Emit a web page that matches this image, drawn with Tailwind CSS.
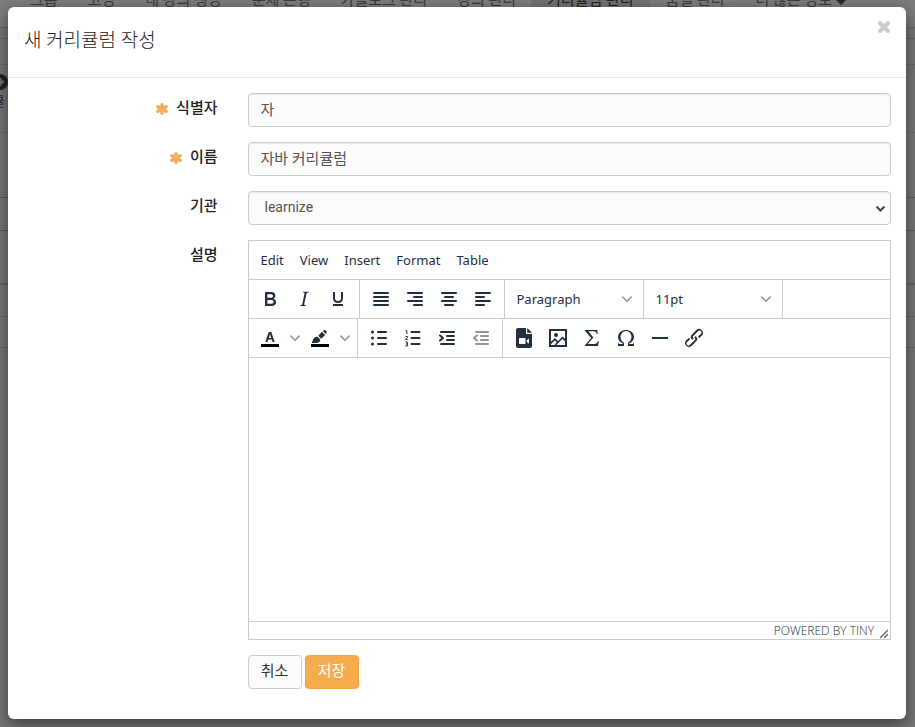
<!DOCTYPE html>
<html lang="ko">
<head>
<meta charset="utf-8">
<meta name="viewport" content="width=device-width, initial-scale=1">
<title>새 커리큘럼 작성</title>
<script src="https://cdn.jsdelivr.net/npm/@tailwindcss/browser@4"></script>
</head>
<body class="min-h-screen overflow-hidden bg-[#ececec] font-['Roboto','Noto_Sans_CJK_KR',sans-serif] text-[15px] text-[#333]">

<!-- Page behind the dialog -->
<div aria-hidden="true" class="absolute inset-0 overflow-hidden">
  <nav class="-mt-4 flex h-11 border-b border-[#d0d0d0] bg-[#f8f8f8] pl-[15px] leading-8 whitespace-nowrap text-[#777]">
    <span class="px-[15px]">그룹</span>
    <span class="px-[15px]">고정</span>
    <span class="px-[15px]">내 강의 생성</span>
    <span class="px-[15px]">문제 은행</span>
    <span class="px-[15px]">카탈로그 관리</span>
    <span class="px-[15px]">강의 관리</span>
    <span class="bg-[#e4e4e4] px-4 text-[#444]">커리큘럼 관리</span>
    <span class="px-4">품질 관리</span>
    <span class="flex gap-1 px-[15px]">더 많은 정보 <span class="mt-4 h-0 border-x-[5px] border-t-[5px] border-x-transparent border-t-[#555]"></span></span>
  </nav>
  <div class="h-[11px] border-b border-[#c8c8c8]"></div>
  <div class="h-[26px] border-b border-[#d0d0d0]"></div>
  <div class="relative h-[68px] border-b border-[#d4d4d4]">
    <svg class="absolute top-[9px] -left-2 size-4" viewBox="0 0 16 16"><circle cx="8" cy="8" r="8" fill="#444"/><path d="M8 4v8M4 8h8" stroke="#ddd" stroke-width="3"/></svg>
    <span class="absolute top-[26px] -left-2 text-[14px] leading-5 text-[#666]">큘</span>
  </div>
  <div class="h-[65px] border-b border-[#b8b8b8]"></div>
  <div class="h-[33px] border-b border-[#b8b8b8]"></div>
  <div class="h-[54px] border-b-2 border-[#c8c8c8]"></div>
  <div class="h-8 border-b border-[#c8c8c8]"></div>
  <div class="h-[31px] border-b border-[#c8c8c8]"></div>
</div>
<div class="absolute inset-0 bg-black/50"></div>

<!-- Dialog -->
<main role="dialog" aria-labelledby="dlg-title" class="relative mt-[7px] mr-[9px] ml-2 rounded-md bg-white shadow-[0_5px_15px_rgba(0,0,0,0.5)]">
  <header class="flex items-start justify-between border-b border-[#e5e5e5] pt-3 pr-[14px] pb-[22px] pl-4">
    <h1 id="dlg-title" class="pt-2 text-[19px] leading-7 font-light text-[#222]">새 커리큘럼 작성</h1>
    <button type="button" aria-label="닫기" class="flex size-4 items-center justify-center text-[#ccc]">
      <svg class="size-4" viewBox="0 0 16 16" fill="none" stroke="currentColor" stroke-width="4" stroke-linecap="round"><path d="M4 4l8 8M12 4l-8 8"/></svg>
    </button>
  </header>

  <form class="grid grid-cols-[25%_75%] gap-y-[15px] pt-[15px] pb-[30px]" onsubmit="return false">
    <label for="f-id" class="flex h-[30px] items-center justify-end gap-2 px-[15px] font-medium text-[#222]">
      <svg class="mt-[2px] size-3 text-[#f0ad5a]" viewBox="0 0 12 12" stroke="currentColor" stroke-width="3.400" stroke-linecap="round"><path d="M6 1.700v8.600M1.900 3.700l8.200 4.600M10.100 3.700l-8.200 4.600"/></svg>식별자</label>
    <div class="px-[15px]"><input id="f-id" type="text" value="자" class="block h-[34px] w-full rounded border border-[#ccc] bg-[#fcfcfc] px-3 pb-1 text-[#555] shadow-[inset_0_1px_1px_rgba(0,0,0,0.075)]"></div>

    <label for="f-name" class="flex h-[30px] items-center justify-end gap-2 px-[15px] font-medium text-[#222]">
      <svg class="mt-[2px] size-3 text-[#f0ad5a]" viewBox="0 0 12 12" stroke="currentColor" stroke-width="3.400" stroke-linecap="round"><path d="M6 1.700v8.600M1.900 3.700l8.200 4.600M10.100 3.700l-8.200 4.600"/></svg>이름</label>
    <div class="px-[15px]"><input id="f-name" type="text" value="자바 커리큘럼" class="block h-[34px] w-full rounded border border-[#ccc] bg-[#fcfcfc] px-3 pb-1 text-[#555] shadow-[inset_0_1px_1px_rgba(0,0,0,0.075)]"></div>

    <label for="f-org" class="flex h-[30px] items-center justify-end px-[15px] font-medium text-[#222]">기관</label>
    <div class="relative px-[15px]">
      <select id="f-org" class="block h-[34px] w-full appearance-none rounded border border-[#ccc] bg-[#fcfcfc] px-4 pb-[2px] text-[14px] text-[#555] shadow-[inset_0_1px_1px_rgba(0,0,0,0.075)]"><option>learnize</option></select>
      <svg class="pointer-events-none absolute top-3 right-5 size-[11px]" viewBox="0 0 11 11" fill="none" stroke="#444" stroke-width="2"><path d="M1.500 3.500l4 4 4-4"/></svg>
    </div>

    <label for="f-desc" class="flex h-[30px] items-center justify-end px-[15px] font-medium text-[#222]">설명</label>
    <div class="px-[15px]">
      <div class="border border-[#ccc] font-['Noto_Sans',sans-serif] text-[13px] text-[#222f3e]">
        <div role="menubar" class="flex h-[39px] items-center border-b border-[#ccc] px-1 pt-[2px]">
          <button type="button" class="px-2">Edit</button>
          <button type="button" class="px-2">View</button>
          <button type="button" class="px-2">Insert</button>
          <button type="button" class="px-2">Format</button>
          <button type="button" class="px-2">Table</button>
        </div>
        <div class="flex h-[39px] border-b border-[#ccc]">
          <div class="flex items-center border-r border-[#ccc] px-1">
            <button type="button" aria-label="Bold" class="flex h-7 w-[34px] items-center justify-center"><svg class="size-6" viewBox="0 0 24 24" fill="currentColor"><path fill-rule="evenodd" d="M7.800 19c-.3 0-.5 0-.6-.2l-.2-.5V5.700c0-.2 0-.4.2-.5l.6-.2h5c1.500 0 2.700.3 3.500 1 .7.6 1.100 1.400 1.100 2.500a3 3 0 0 1-.6 1.900c-.4.6-1 1-1.600 1.200.4.1.9.3 1.300.6s.8.7 1 1.200c.4.4.5 1 .5 1.600 0 1.300-.4 2.300-1.300 3-.8.7-2.100 1-3.800 1H7.800zm5-8.300c.6 0 1.200-.1 1.600-.5.4-.3.6-.7.6-1.300 0-1.100-.8-1.700-2.300-1.700H9.300v3.500h3.400zm.5 6c.7 0 1.300-.1 1.700-.4.4-.4.6-.9.6-1.500s-.2-1-.7-1.400c-.4-.3-1-.4-2-.4H9.400v3.800h4z"/></svg></button>
            <button type="button" aria-label="Italic" class="flex h-7 w-[34px] items-center justify-center"><svg class="size-6" viewBox="0 0 24 24" fill="currentColor"><path d="M16.700 4.700l-.1.9h-.3c-.6 0-1 0-1.400.3-.3.3-.4.6-.5 1.100l-2.100 9.800v.6c0 .5.4.8 1.400.8h.2l-.2.8H8l.2-.8h.2c1.100 0 1.800-.5 2-1.500l2-9.800.1-.5c0-.6-.4-.8-1.400-.8h-.3l.2-.9h5.800z"/></svg></button>
            <button type="button" aria-label="Underline" class="flex h-7 w-[34px] items-center justify-center"><svg class="size-6" viewBox="0 0 24 24" fill="none" stroke="currentColor" stroke-width="2"><path d="M8 5v6c0 2.500 1.500 4 4 4s4-1.500 4-4V5M7 18h10"/></svg></button>
          </div>
          <div class="flex items-center border-r border-[#ccc] px-1">
            <button type="button" aria-label="Justify" class="flex h-7 w-[34px] items-center justify-center"><svg class="size-6" viewBox="0 0 24 24" stroke="currentColor" stroke-width="2" stroke-linecap="round"><path d="M5 6h14M5 10h14M5 14h14M5 18h14"/></svg></button>
            <button type="button" aria-label="Align right" class="flex h-7 w-[34px] items-center justify-center"><svg class="size-6" viewBox="0 0 24 24" stroke="currentColor" stroke-width="2" stroke-linecap="round"><path d="M5 6h14M11 10h8M5 14h14M11 18h8"/></svg></button>
            <button type="button" aria-label="Align center" class="flex h-7 w-[34px] items-center justify-center"><svg class="size-6" viewBox="0 0 24 24" stroke="currentColor" stroke-width="2" stroke-linecap="round"><path d="M5 6h14M8 10h8M5 14h14M8 18h8"/></svg></button>
            <button type="button" aria-label="Align left" class="flex h-7 w-[34px] items-center justify-center"><svg class="size-6" viewBox="0 0 24 24" stroke="currentColor" stroke-width="2" stroke-linecap="round"><path d="M5 6h14M5 10h8M5 14h14M5 18h8"/></svg></button>
          </div>
          <div class="flex items-center border-r border-[#ccc] px-1">
            <button type="button" class="flex h-7 w-[130px] items-center justify-between pr-[7px] pl-2"><span class="pt-[2px]">Paragraph</span> <svg class="size-[10px]" viewBox="0 0 10 10" fill="none" stroke="#8b9299" stroke-width="1.500" stroke-linecap="round"><path d="M.8 3L5 7.200 9.200 3"/></svg></button>
          </div>
          <div class="flex items-center border-r border-[#ccc] px-1">
            <button type="button" class="flex h-7 w-[130px] items-center justify-between pr-[7px] pl-2"><span class="pt-[2px]">11pt</span> <svg class="size-[10px]" viewBox="0 0 10 10" fill="none" stroke="#8b9299" stroke-width="1.500" stroke-linecap="round"><path d="M.8 3L5 7.200 9.200 3"/></svg></button>
          </div>
        </div>
        <div class="flex h-[39px] border-b border-[#ccc]">
          <div class="flex items-center border-r border-[#ccc] px-1">
            <button type="button" aria-label="Text color" class="flex h-7 w-[34px] items-center justify-center"><svg class="size-6" viewBox="0 0 24 24" fill="currentColor"><path d="M3 18h18v3H3z" fill="#000"/><path fill-rule="evenodd" d="M7.300 16L10.700 6h2.600l3.400 10h-2.100l-.8-2.400h-3.600L9.400 16zM12 8.300L10.800 12h2.400z"/></svg></button>
            <button type="button" aria-label="Text color menu" class="flex h-7 w-4 items-center justify-center"><svg class="size-[10px]" viewBox="0 0 10 10" fill="none" stroke="#8b9299" stroke-width="1.500" stroke-linecap="round"><path d="M.8 3L5 7.200 9.200 3"/></svg></button>
            <button type="button" aria-label="Background color" class="flex h-7 w-[34px] items-center justify-center"><svg class="size-6" viewBox="0 0 24 24" fill="currentColor"><path d="M3 18h18v3H3z" fill="#000"/><path d="M3.500 17c.9-.9 1-2.200 1.700-3.700.8-1.800 2.300-2.800 4.300-2.600l2.800 2.900c.2 2-1.600 3.400-3.800 3.400zM10.300 9.700l3.600-3.900 3.200 3.200-3.900 3.700zM14.800 4.900c1-1 2.300-1.100 3.200-.2s.7 2.200-.1 3.300z"/></svg></button>
            <button type="button" aria-label="Background color menu" class="flex h-7 w-4 items-center justify-center"><svg class="size-[10px]" viewBox="0 0 10 10" fill="none" stroke="#8b9299" stroke-width="1.500" stroke-linecap="round"><path d="M.8 3L5 7.200 9.200 3"/></svg></button>
          </div>
          <div class="flex items-center border-r border-[#ccc] px-1">
            <button type="button" aria-label="Bullet list" class="flex h-7 w-[34px] items-center justify-center"><svg class="size-6" viewBox="0 0 24 24" fill="currentColor"><g stroke="currentColor" stroke-width="2" stroke-linecap="round"><path d="M11 6h8M11 12h8M11 18h8"/></g><circle cx="5.500" cy="6" r="1.500"/><circle cx="5.500" cy="12" r="1.500"/><circle cx="5.500" cy="18" r="1.500"/></svg></button>
            <button type="button" aria-label="Numbered list" class="flex h-7 w-[34px] items-center justify-center"><svg class="size-6" viewBox="0 0 24 24" fill="none" stroke="currentColor"><path stroke-width="2" stroke-linecap="round" d="M10.500 6h8M10.500 12h8M10.500 18h8"/><path d="M4.500 4.700h1.400V8M4.400 10.500h2v1.300l-1.700 1.600h2M4.400 16h2v4h-2M4.700 18h1.700"/></svg></button>
            <button type="button" aria-label="Increase indent" class="flex h-7 w-[34px] items-center justify-center"><svg class="size-6" viewBox="0 0 24 24" fill="none" stroke="currentColor" stroke-width="2" stroke-linecap="round" stroke-linejoin="round"><path d="M6 6h13M12 10h7M12 14h7M6 18h13"/><path d="M5 9.500L8 12l-3 2.500"/></svg></button>
            <button type="button" aria-label="Decrease indent" disabled class="flex h-7 w-[34px] items-center justify-center opacity-50"><svg class="size-6" viewBox="0 0 24 24" fill="none" stroke="currentColor" stroke-width="2" stroke-linecap="round" stroke-linejoin="round"><path d="M7 6h12M12 10h7M12 14h7M7 18h12"/><path d="M8 9.500L5 12l3 2.500"/></svg></button>
          </div>
          <div class="flex items-center px-1">
            <button type="button" aria-label="Media" class="flex h-7 w-[34px] items-center justify-center"><svg class="size-6" viewBox="0 0 24 24" fill="currentColor"><path fill-rule="evenodd" d="M6 2h8v6h6v12a2 2 0 0 1-2 2H6a2 2 0 0 1-2-2V4c0-1.100.9-2 2-2zM7.500 12c-.3 0-.5.200-.5.500v5c0 .300.200.500.500.500h5.500c.300 0 .500-.200.500-.500v-5c0-.300-.200-.500-.500-.500zm7.200 2.300v1.800l2.300 1.700v-5.300z"/><path d="M15.200 2l4.800 4.800h-4.800z"/></svg></button>
            <button type="button" aria-label="Image" class="flex h-7 w-[34px] items-center justify-center"><svg class="size-6" viewBox="0 0 24 24" fill="none" stroke="currentColor" stroke-width="2"><rect x="4" y="4" width="16" height="16"/><path stroke-width="1.700" d="M4.500 17.300l4.300-4.200 2.800 2.800M9.200 19l7.300-7.300 3.500 3.400"/><circle cx="10" cy="9" r="2" fill="currentColor" stroke="none"/></svg></button>
            <button type="button" aria-label="Equation" class="flex h-7 w-[34px] items-center justify-center"><svg class="size-6" viewBox="0 0 24 24" fill="currentColor"><path d="M5 4h12.300l.4 4h-.9c-.4-2-1.200-2.700-3.200-2.700H8.400l5 6.200-5.700 6.600h6.400c2.200 0 3.200-.8 3.800-3h.9L18 20H5v-.8l6.200-7.200L5 4.700z"/></svg></button>
            <button type="button" aria-label="Special character" class="flex h-7 w-[34px] items-center justify-center"><svg class="size-6" viewBox="0 0 24 24" fill="currentColor"><path d="M15 18h4l1-2v4h-6v-3.300l1.400-1a6 6 0 0 0 1.800-2.900 6.300 6.300 0 0 0-.1-4.100 5.800 5.800 0 0 0-3-3.200c-.6-.3-1.300-.5-2.100-.5a5.100 5.100 0 0 0-3.900 1.800 6.300 6.300 0 0 0-1.300 6 6.200 6.200 0 0 0 1.800 3l1.400.9V20H4v-4l1 2h4v-.5l-2-1L5.400 15A6.500 6.500 0 0 1 4 11c0-1 .2-1.900.6-2.700A7 7 0 0 1 7.800 5C9 4.300 10.500 4 12 4s3 .3 4.200 1a7 7 0 0 1 3.200 3.300c.4.8.6 1.700.6 2.700 0 1.400-.5 2.800-1.500 4L17 16.500l-2 1v.5z"/></svg></button>
            <button type="button" aria-label="Horizontal line" class="flex h-7 w-[34px] items-center justify-center"><svg class="size-6" viewBox="0 0 24 24" fill="currentColor"><path d="M4 11h16v2H4z"/></svg></button>
            <button type="button" aria-label="Link" class="flex h-7 w-[34px] items-center justify-center"><svg class="size-6" viewBox="0 0 24 24" fill="currentColor"><path d="M6.200 12.300a1 1 0 0 1 1.400 1.400l-2.100 2a2 2 0 1 0 2.700 2.800l4.800-4.800a1 1 0 0 0 0-1.400 1 1 0 1 1 1.400-1.300 2.900 2.900 0 0 1 0 4L9.600 20a3.900 3.900 0 0 1-5.500-5.500l2-2zm11.600-.6a1 1 0 0 1-1.400-1.400l2-2a2 2 0 1 0-2.600-2.800L11 10.300a1 1 0 0 0 0 1.400A1 1 0 1 1 9.600 13a2.900 2.900 0 0 1 0-4L14.400 4a3.900 3.900 0 0 1 5.500 5.500l-2 2z"/></svg></button>
          </div>
        </div>
        <textarea id="f-desc" class="block h-[263px] w-full resize-none p-3 outline-none"></textarea>
        <div class="flex h-[18px] items-center justify-end gap-[5px] border-t border-[#ccc] pr-px text-[12px] text-[#222f3e]">
          <a href="#" class="font-['Open_Sans',sans-serif] font-light">POWERED BY TINY</a>
          <svg class="size-[10px] self-end opacity-70" viewBox="0 0 10 10" fill="none" stroke="currentColor" stroke-width="1.500" stroke-linecap="round"><path d="M1.500 8.500l7-7M5.500 8.500l3-3"/></svg>
        </div>
      </div>
    </div>

    <div class="col-start-2 flex gap-[3px] px-[15px]">
      <button type="button" class="h-[34px] min-w-[54px] rounded border border-[#ccc] bg-[#fcfcfc] px-3 pb-[2px] text-[#333]">취소</button>
      <button type="submit" class="h-[34px] min-w-[54px] rounded border border-[#f0a23c] bg-[#f6ab4c] px-3 pb-[2px] text-white">저장</button>
    </div>
  </form>
</main>
</body>
</html>
